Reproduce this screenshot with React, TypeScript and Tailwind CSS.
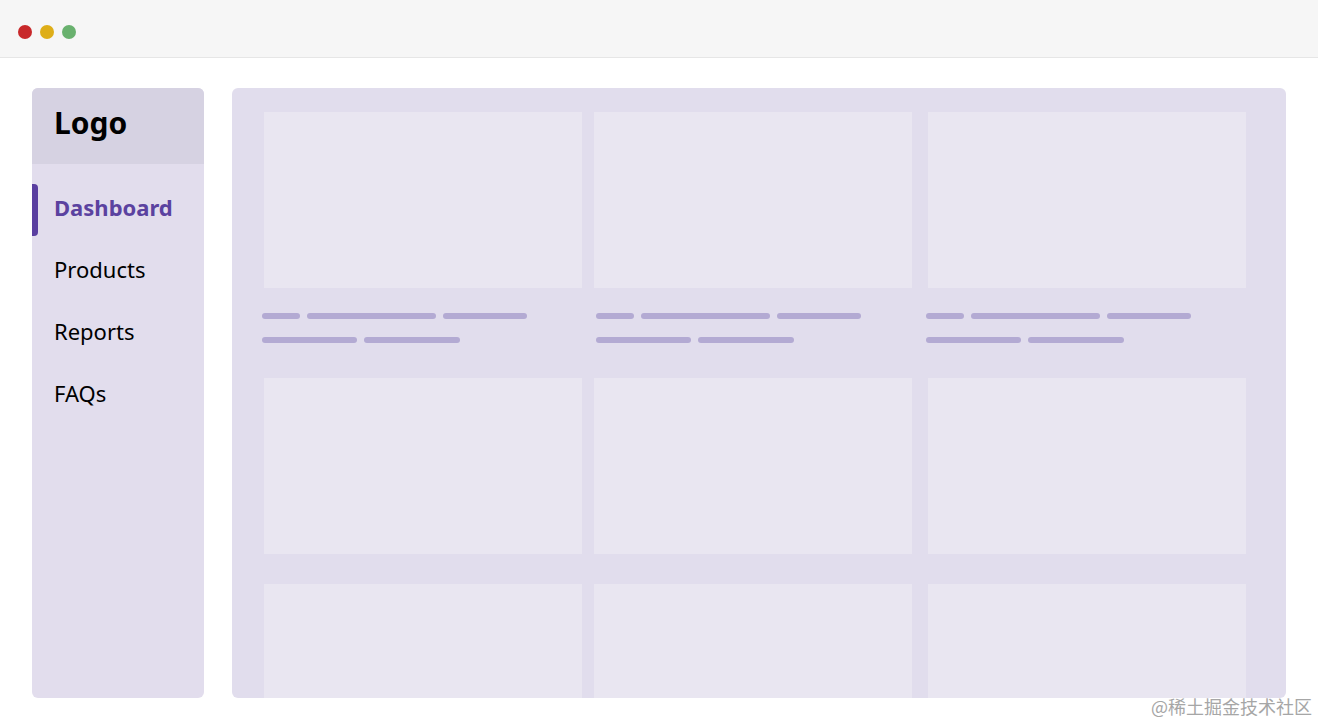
const NAV = ["Dashboard", "Products", "Reports", "FAQs"];

// placeholder text bar widths under each card of the first row
const LINE_ONE = [38, 129, 84];
const LINE_TWO = [95, 96];

function Card() {
  return <div className="h-[176px] w-[318px] bg-[#e9e6f1]" />;
}

function TextLines({ offset }: { offset: number }) {
  return (
    <div className="flex flex-col gap-[18px]" style={{ marginLeft: offset }}>
      <div className="flex gap-[7px]">
        {LINE_ONE.map((w, i) => (
          <div key={i} className="h-[6px] rounded-full bg-[#b3aad3]" style={{ width: w }} />
        ))}
      </div>
      <div className="flex gap-[7px]">
        {LINE_TWO.map((w, i) => (
          <div key={i} className="h-[6px] rounded-full bg-[#b3aad3]" style={{ width: w }} />
        ))}
      </div>
    </div>
  );
}

function CardRow() {
  return (
    <div className="flex">
      <Card />
      <div className="ml-[12px]">
        <Card />
      </div>
      <div className="ml-[16px]">
        <Card />
      </div>
    </div>
  );
}

export default function App() {
  return (
    <div className="relative h-[726px] w-[1318px] overflow-hidden bg-white font-['Noto_Sans',sans-serif]">
      {/* window chrome */}
      <div className="flex h-[58px] items-center gap-[8px] border-b border-[#e6e6e6] bg-[#f6f6f6] pl-[18px]">
        <div className="mt-[6px] h-[14px] w-[14px] rounded-full bg-[#c8282a]" />
        <div className="mt-[6px] h-[14px] w-[14px] rounded-full bg-[#deae19]" />
        <div className="mt-[6px] h-[14px] w-[14px] rounded-full bg-[#69b16e]" />
      </div>

      <div className="flex gap-[28px] px-[32px] pt-[30px]">
        {/* sidebar */}
        <aside className="h-[610px] w-[172px] overflow-hidden rounded-[6px] bg-[#e2dded]">
          <div className="flex h-[76px] items-center bg-[#d6d2e2] pb-[8px] pl-[22px]">
            <span className="text-[30px] font-bold text-black">Logo</span>
          </div>
          <nav className="flex flex-col pt-[20px]">
            {NAV.map((item, i) => (
              <div key={item} className="relative flex h-[62px] items-center pl-[22px]">
                {i === 0 && (
                  <div className="absolute left-0 top-0 h-[52px] w-[6px] rounded-r-[4px] bg-[#5a3fa0]" />
                )}
                <span
                  className={
                    i === 0
                      ? "mt-[-16px] text-[22px] font-bold text-[#5b42a0]"
                      : "mt-[-16px] text-[22px] text-black"
                  }
                >
                  {item}
                </span>
              </div>
            ))}
          </nav>
        </aside>

        {/* main content */}
        <main className="h-[610px] w-[1054px] overflow-hidden rounded-[6px] bg-[#e1dded] pl-[32px] pt-[24px]">
          <CardRow />
          <div className="flex pt-[25px]">
            <div className="w-[330px]">
              <TextLines offset={-2} />
            </div>
            <div className="w-[334px]">
              <TextLines offset={2} />
            </div>
            <div>
              <TextLines offset={-2} />
            </div>
          </div>
          <div className="pt-[35px]">
            <CardRow />
          </div>
          <div className="pt-[30px]">
            <CardRow />
          </div>
        </main>
      </div>

      <div className="absolute bottom-[6px] right-[6px] font-['Noto_Sans_CJK_SC',sans-serif] text-[18px] text-[#a6a6a6]">
        @稀土掘金技术社区
      </div>
    </div>
  );
}
